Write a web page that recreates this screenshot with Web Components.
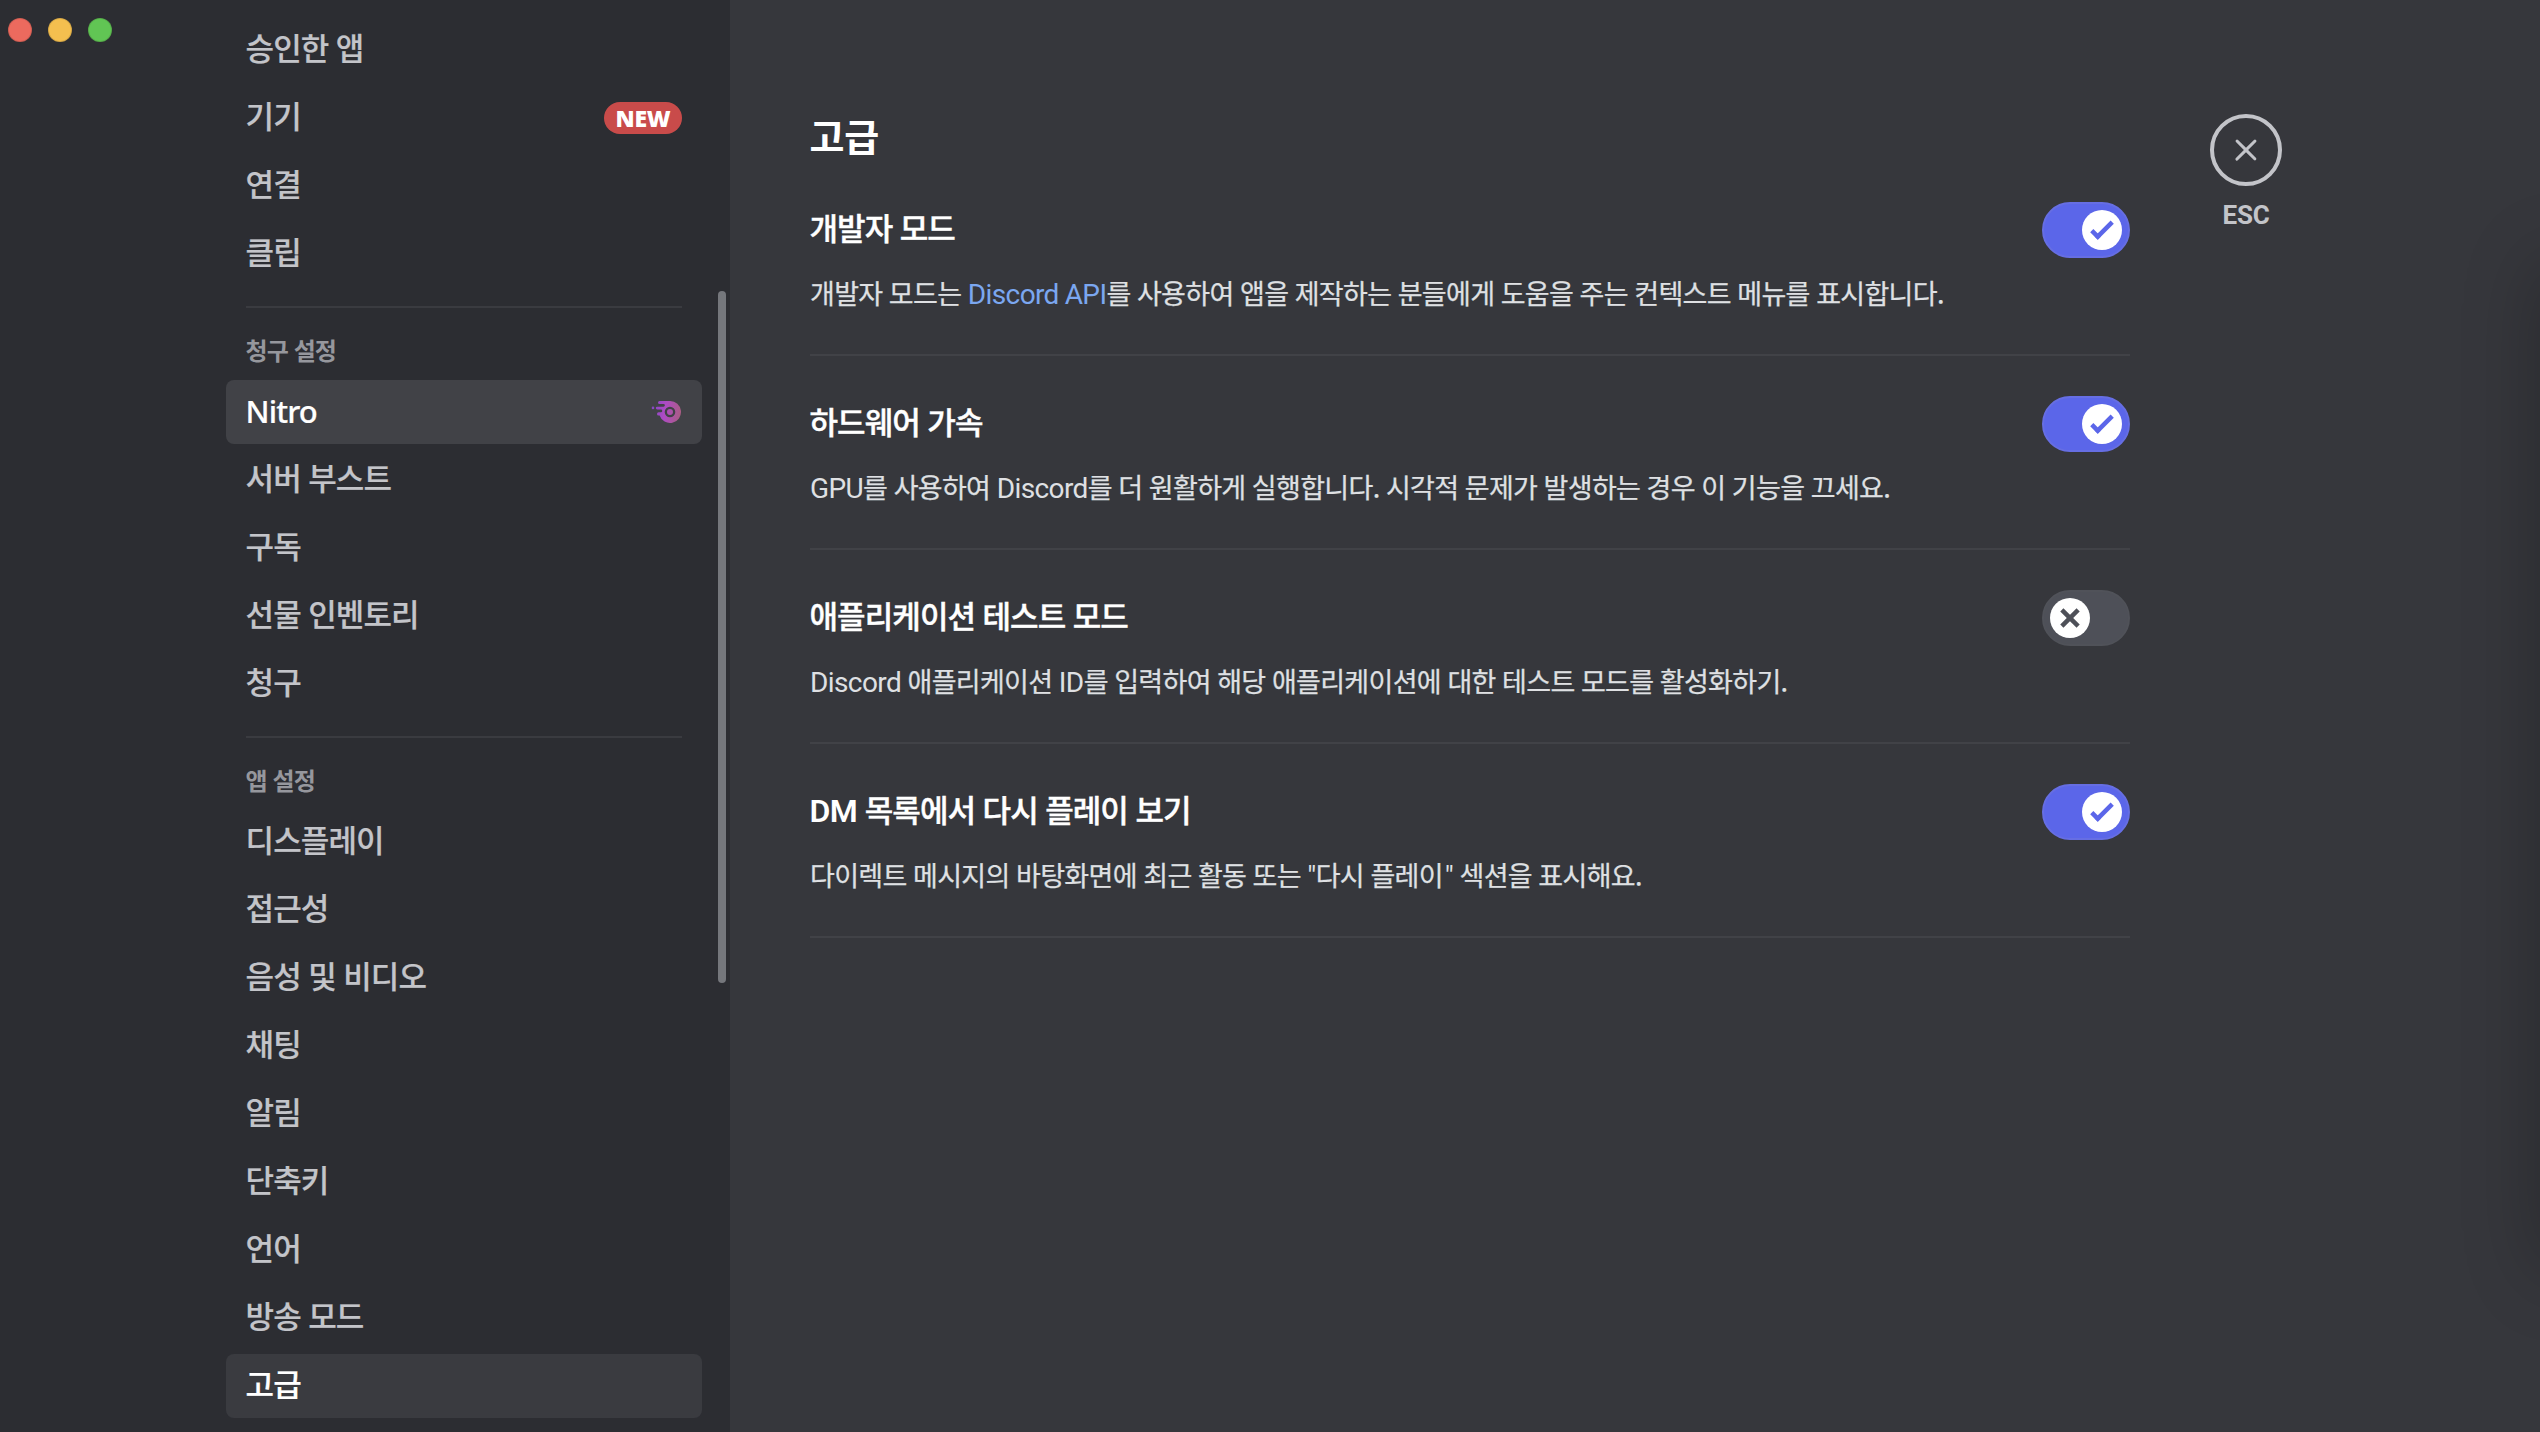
<!DOCTYPE html>
<html lang="ko">
<head>
<meta charset="utf-8">
<title>고급</title>
<style>
  html, body {
    margin: 0;
    height: 100%;
    overflow: hidden;
  }

  body {
    --bg-main: #36373c;
    --bg-side: #2c2d32;
    --text-white: #fff;
    --text-normal: #dfe0e3;
    --text-muted: #c3c4c9;
    --latin: Roboto, "Noto Sans CJK KR", sans-serif;
    background: var(--bg-main);
    color: var(--text-normal);
    font-family: "Noto Sans CJK KR", sans-serif;
  }
</style>
</head>
<body>
<settings-window>
  <window-controls slot="controls"></window-controls>

  <settings-nav slot="nav">
    <nav-item>승인한 앱</nav-item>
    <nav-item>기기<new-badge slot="end">NEW</new-badge></nav-item>
    <nav-item>연결</nav-item>
    <nav-item>클립</nav-item>
    <nav-header>청구 설정</nav-header>
    <nav-item hovered latin>Nitro<nitro-icon slot="end"></nitro-icon></nav-item>
    <nav-item>서버 부스트</nav-item>
    <nav-item>구독</nav-item>
    <nav-item>선물 인벤토리</nav-item>
    <nav-item>청구</nav-item>
    <nav-header>앱 설정</nav-header>
    <nav-item>디스플레이</nav-item>
    <nav-item>접근성</nav-item>
    <nav-item>음성 및 비디오</nav-item>
    <nav-item>채팅</nav-item>
    <nav-item>알림</nav-item>
    <nav-item>단축키</nav-item>
    <nav-item>언어</nav-item>
    <nav-item>방송 모드</nav-item>
    <nav-item selected>고급</nav-item>
  </settings-nav>

  <settings-panel heading="고급">
    <setting-row checked>
      <span slot="title">개발자 모드</span>
      개발자 모드는 <latin-text link>Discord API</latin-text>를 사용하여 앱을 제작하는 분들에게 도움을 주는 컨텍스트 메뉴를 표시합니다.
    </setting-row>
    <setting-row checked>
      <span slot="title">하드웨어 가속</span>
      <latin-text>GPU</latin-text>를 사용하여 <latin-text>Discord</latin-text>를 더 원활하게 실행합니다. 시각적 문제가 발생하는 경우 이 기능을 끄세요.
    </setting-row>
    <setting-row>
      <span slot="title">애플리케이션 테스트 모드</span>
      <latin-text>Discord</latin-text> 애플리케이션 <latin-text>ID</latin-text>를 입력하여 해당 애플리케이션에 대한 테스트 모드를 활성화하기.
    </setting-row>
    <setting-row checked>
      <span slot="title"><latin-text strong>DM</latin-text> 목록에서 다시 플레이 보기</span>
      다이렉트 메시지의 바탕화면에 최근 활동 또는 <latin-text>"</latin-text>다시 플레이<latin-text tight>"</latin-text> 섹션을 표시해요.
    </setting-row>
  </settings-panel>

  <close-button slot="close">ESC</close-button>
</settings-window>

<script>
// Attaches an open shadow root filled with the given markup.
class BaseElement extends HTMLElement {
  constructor() {
    super();
    this.attachShadow({ mode: 'open' });
  }

  connectedCallback() {
    this.shadowRoot.innerHTML = this.template();
  }
}

class SettingsWindow extends BaseElement {
  template() {
    return `
      <style>
        :host {
          display: grid;
          grid-template-columns: 730px 1fr;
          height: 100vh;
          position: relative;
          overflow: hidden;
        }
        aside {
          background: var(--bg-side);
          overflow: hidden;
          position: relative;
        }
        main {
          display: flex;
          align-items: flex-start;
          gap: 80px;
          padding-left: 80px;
        }
        .controls {
          position: absolute;
          left: 8px;
          top: 18px;
        }
        .scrollbar {
          position: absolute;
          right: 4px;
          top: 291px;
          width: 8px;
          height: 692px;
          border-radius: 4px;
          background: #75777c;
        }
        /* shadow falling in from the right edge of the window */
        .shade {
          position: absolute;
          left: 100%;
          top: 262px;
          width: 60px;
          height: 1010px;
          border-radius: 20px;
          box-shadow: 0 0 76px rgb(0 0 0 / .27);
        }
      </style>
      <aside>
        <slot name="nav"></slot>
        <div class="scrollbar"></div>
        <div class="controls"><slot name="controls"></slot></div>
      </aside>
      <main><slot></slot><slot name="close"></slot></main>
      <div class="shade"></div>
    `;
  }
}

class WindowControls extends BaseElement {
  template() {
    return `
      <style>
        :host { display: flex; gap: 16px; }
        i { width: 24px; height: 24px; border-radius: 50%; box-sizing: border-box; border: 1px solid rgb(0 0 0 / .12); }
        .close { background: #ec6a5e; }
        .min { background: #f4bf4f; }
        .max { background: #61c554; }
      </style>
      <i class="close"></i><i class="min"></i><i class="max"></i>
    `;
  }
}

class SettingsNav extends BaseElement {
  template() {
    return `
      <style>
        :host {
          display: flex;
          flex-direction: column;
          gap: 4px;
          width: 476px;
          padding: 18px 0 0 226px;
        }
      </style>
      <slot></slot>
    `;
  }
}

class NavItem extends BaseElement {
  template() {
    return `
      <style>
        :host {
          display: flex;
          align-items: center;
          justify-content: space-between;
          box-sizing: border-box;
          height: 64px;
          padding: 0 20px 0 19.6px;
          border-radius: 8px;
          color: var(--text-muted);
          font-size: 31px;
          font-weight: 500;
          line-height: 40px;
          letter-spacing: -.92px;
          word-spacing: -.35px;
          -webkit-text-stroke: .2px currentColor;
        }
        :host([hovered]) { background: #414247; color: var(--text-white); }
        :host([selected]) { background: #3a3b40; color: var(--text-white); }
        :host([latin]) { font-family: "Noto Sans", sans-serif; letter-spacing: -.9px; }
        .label { padding-bottom: 7px; }
        :host([latin]) .label { padding-bottom: 2px; }
      </style>
      <span class="label"><slot></slot></span>
      <slot name="end"></slot>
    `;
  }
}

class NavHeader extends BaseElement {
  template() {
    return `
      <style>
        :host {
          display: block;
          box-sizing: border-box;
          height: 70px;
          margin: 16px 20px 0;
          border-top: 2px solid #3a3b40;
          padding-top: 25px;
          color: #96979d;
          font-size: 24px;
          font-weight: 700;
          line-height: 34px;
          letter-spacing: -.9px;
          text-indent: -.5px;
        }
      </style>
      <slot></slot>
    `;
  }
}

class NewBadge extends BaseElement {
  template() {
    return `
      <style>
        :host {
          display: flex;
          align-items: center;
          justify-content: center;
          width: 78px;
          height: 32px;
          border-radius: 16px;
          background: #c94b4a;
          color: var(--text-white);
          font: 900 23px/32px "Noto Sans", sans-serif;
          letter-spacing: -.2px;
          -webkit-text-stroke: 0;
        }
      </style>
      <slot></slot>
    `;
  }
}

class NitroIcon extends BaseElement {
  template() {
    return `
      <style>
        :host { display: block; width: 32px; height: 24px; }
        svg { display: block; }
      </style>
      <svg width="32" height="24" viewBox="0 0 32 24">
        <defs>
          <linearGradient id="g" x1="0" x2="1" y1=".4" y2=".5">
            <stop offset="0" stop-color="#8547c6"/>
            <stop offset=".45" stop-color="#ae4bc4"/>
            <stop offset="1" stop-color="#aa5d84"/>
          </linearGradient>
        </defs>
        <path fill="url(#g)" fill-rule="evenodd" d="M9.5 1H20A11 11 0 1 1 9.6 15.5H8.6a1.6 1.6 0 0 1 0-3.2H11A1.2 1.2 0 0 0 12.2 11 1.3 1.3 0 0 0 11 9.5H7.2a1.3 1.3 0 0 1 0-2.8H13.5a1.3 1.3 0 0 0 0-2.7H9.5a1.5 1.5 0 0 1 0-3zM20 6.7a5.3 5.3 0 1 0 0 10.6 5.3 5.3 0 0 0 0-10.6zM20 9a3 3 0 1 1 0 6 3 3 0 0 1 0-6zM3 6.6a1.3 1.3 0 1 1 0 2.6 1.3 1.3 0 0 1 0-2.6z"/>
      </svg>
    `;
  }
}

class SettingsPanel extends BaseElement {
  template() {
    return `
      <style>
        :host { display: block; width: 1320px; padding-top: 112px; }
        h2 {
          margin: 0 0 40px;
          height: 50px;
          color: var(--text-white);
          font-size: 38px;
          font-weight: 600;
          line-height: 46px;
          letter-spacing: -.2px;
          text-indent: -.5px;
        }
      </style>
      <h2>${this.getAttribute('heading')}</h2>
      <slot></slot>
    `;
  }
}

class SettingRow extends BaseElement {
  template() {
    return `
      <style>
        :host {
          display: block;
          box-sizing: border-box;
          height: 154px;
          margin-bottom: 40px;
          border-bottom: 2px solid #414247;
        }
        .head {
          display: flex;
          align-items: center;
          justify-content: space-between;
          height: 56px;
        }
        .title {
          padding-bottom: 6px;
          margin-left: -.5px;
          color: var(--text-white);
          font-size: 31px;
          font-weight: 500;
          line-height: 40px;
          letter-spacing: -.92px;
          word-spacing: -.35px;
          -webkit-text-stroke: .4px currentColor;
        }
        .note {
          margin-top: 15px;
          font-size: 27px;
          line-height: 40px;
          letter-spacing: -.68px;
          word-spacing: -.5px;
          white-space: nowrap;
          -webkit-text-stroke: .25px currentColor;
        }
      </style>
      <div class="head">
        <span class="title"><slot name="title"></slot></span>
        <toggle-switch ${this.hasAttribute('checked') ? 'checked' : ''}></toggle-switch>
      </div>
      <div class="note"><slot></slot></div>
    `;
  }
}

class LatinText extends BaseElement {
  template() {
    return `
      <style>
        :host {
          display: inline;
          font-family: var(--latin);
          font-size: 28px;
          letter-spacing: -.6px;
          line-height: 1;
          -webkit-text-stroke: 0;
        }
        :host([link]) { color: #7ba7f0; }
        :host([strong]) { font-size: 32px; font-weight: 600; letter-spacing: -.5px; }
        :host([tight]) { margin-left: -4px; }
      </style><slot></slot>`;
  }
}

class ToggleSwitch extends BaseElement {
  template() {
    const on = this.hasAttribute('checked');
    const mark = on
      ? `<path d="M7.9 14.85 6.3 13.26 14.31 5.26 15.9 6.85z"/>
         <path d="M4.09 11.09 5.68 9.5 9.45 13.27 7.86 14.86z"/>`
      : `<path d="M5.13 6.73 6.72 5.14 14.86 13.27 13.27 14.86z"/>
         <path d="M13.27 5.14 14.86 6.73 6.73 14.86 5.14 13.27z"/>`;

    return `
      <style>
        :host {
          display: flex;
          justify-content: flex-start;
          box-sizing: border-box;
          width: 88px;
          height: 56px;
          padding: 6px;
          border: 2px solid #505259;
          border-radius: 28px;
          background: #4e5058;
          color: #4e5058;
        }
        :host([checked]) {
          justify-content: flex-end;
          border-color: #666ee3;
          background: #5b66e9;
          color: #5b66e9;
        }
        svg { border-radius: 50%; background: #fff; fill: currentColor; }
      </style>
      <svg width="40" height="40" viewBox="0 0 20 20">${mark}</svg>
    `;
  }
}

class CloseButton extends BaseElement {
  template() {
    return `
      <style>
        :host {
          display: flex;
          flex-direction: column;
          align-items: center;
          width: 72px;
          margin-top: 114px;
          color: var(--text-muted);
          font: 700 26px/32px var(--latin);
          letter-spacing: -.2px;
        }
        .ring {
          display: grid;
          place-items: center;
          box-sizing: border-box;
          width: 72px;
          height: 72px;
          margin-bottom: 13px;
          border: 4px solid currentColor;
          border-radius: 50%;
        }
      </style>
      <div class="ring">
        <svg width="36" height="36" viewBox="0 0 24 24" fill="currentColor">
          <path d="M17.3 18.7a1 1 0 0 0 1.4-1.4L13.42 12l5.3-5.3a1 1 0 0 0-1.42-1.4L12 10.58l-5.3-5.3a1 1 0 0 0-1.4 1.42L10.58 12l-5.3 5.3a1 1 0 1 0 1.42 1.4L12 13.42l5.3 5.3Z"/>
        </svg>
      </div>
      <slot></slot>
    `;
  }
}

customElements.define('settings-window', SettingsWindow);
customElements.define('window-controls', WindowControls);
customElements.define('settings-nav', SettingsNav);
customElements.define('nav-item', NavItem);
customElements.define('nav-header', NavHeader);
customElements.define('new-badge', NewBadge);
customElements.define('nitro-icon', NitroIcon);
customElements.define('settings-panel', SettingsPanel);
customElements.define('setting-row', SettingRow);
customElements.define('latin-text', LatinText);
customElements.define('toggle-switch', ToggleSwitch);
customElements.define('close-button', CloseButton);
</script>
</body>
</html>
